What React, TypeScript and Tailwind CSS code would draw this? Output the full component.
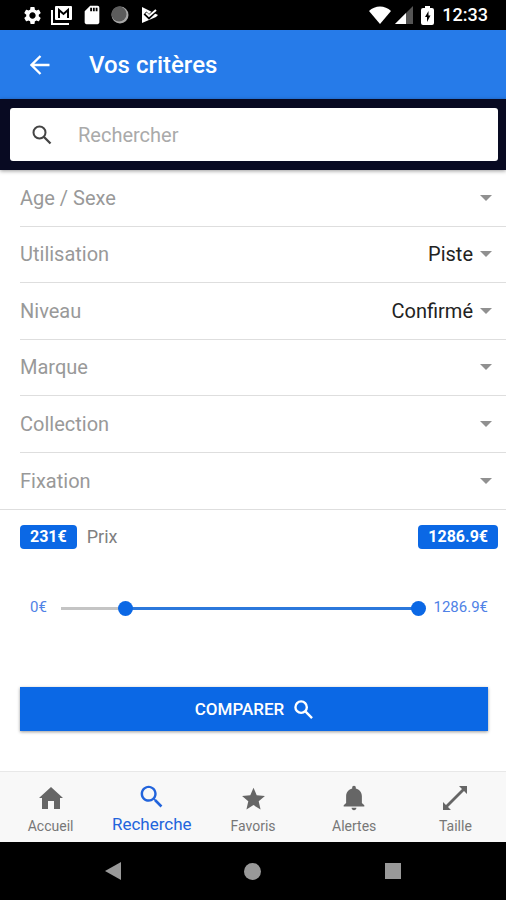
import { useState } from "react";
import type { ReactNode } from "react";
import { IoMdNotifications, IoMdSearch, IoMdStar } from "react-icons/io";
import { MdSdCard, MdSettings } from "react-icons/md";

const MAX_PRICE = 1286.9;

const criteria = [
  { id: "age", label: "Age / Sexe", value: "" },
  { id: "usage", label: "Utilisation", value: "Piste" },
  { id: "level", label: "Niveau", value: "Confirmé" },
  { id: "brand", label: "Marque", value: "" },
  { id: "collection", label: "Collection", value: "" },
  { id: "binding", label: "Fixation", value: "" },
];

function StatusBar() {
  return (
    <div className="flex h-[30px] items-center justify-between bg-black pr-[18px] pl-[22px] text-white">
      <div className="flex items-center gap-2">
        <MdSettings size={21} />
        <svg width="22" height="20" viewBox="0 0 22 20" fill="none" stroke="currentColor">
          <path d="M1 5v14h17" strokeWidth="2" />
          <rect x="4" y="1" width="17" height="14" rx="1" fill="currentColor" stroke="none" />
          <path d="M8 13V5l4.500 4L17 5v8" stroke="#000" strokeWidth="2" />
        </svg>
        <MdSdCard size={22} />
        <svg width="18" height="18" viewBox="0 0 18 18">
          <circle cx="9" cy="9" r="8.500" fill="#a8a8a8" />
          <circle cx="8" cy="8" r="7.500" fill="#5c5c5c" />
        </svg>
        <svg className="ml-1" width="18" height="18" viewBox="0 0 18 18">
          <path d="M1 1l8 4 4 2 4 2-2 2L1 17z" fill="#fff" />
          <path d="M4 7l4 4 8-8" fill="none" stroke="#000" strokeWidth="4" />
          <path d="M5 7l3 3 7-6" fill="none" stroke="#fff" strokeWidth="2" />
        </svg>
      </div>
      <div className="flex items-center">
        <svg width="22" height="18" viewBox="0 0 22 18" fill="currentColor">
          <path d="M0 5C6-1 16-1 22 5L11 18z" />
        </svg>
        <svg className="ml-1" width="18" height="18" viewBox="0 0 18 18">
          <path d="M18 0v18H0z" fill="#555" />
          <path d="M11 7v11H0z" fill="#fff" />
        </svg>
        <svg className="mr-2 ml-2" width="13" height="19" viewBox="0 0 13 19">
          <path d="M4 0h5v2h2q2 0 2 2v13q0 2-2 2H2q-2 0-2-2V4q0-2 2-2h2z" fill="#fff" />
          <path d="M7.500 5L4 11h2v5l3.500-6.500H7.500z" fill="#000" />
        </svg>
        <span className="text-lg leading-6 font-medium">12:33</span>
      </div>
    </div>
  );
}

function PriceSlider() {
  const [low, setLow] = useState(231);
  const [high, setHigh] = useState(MAX_PRICE);
  const range =
    "pointer-events-none absolute inset-0 m-0 h-4 w-full appearance-none bg-transparent [&::-webkit-slider-thumb]:pointer-events-auto [&::-webkit-slider-thumb]:size-[15px] [&::-webkit-slider-thumb]:appearance-none [&::-webkit-slider-thumb]:rounded-full [&::-webkit-slider-thumb]:bg-[#0b68e5]";
  return (
    <section>
      <div className="flex items-center pt-[15px] pr-2 pl-5">
        <span className="h-6 rounded-[4px] bg-[#0b68e5] px-[10px] text-base leading-[23px] font-bold text-white">{low}€</span>
        <span className="ml-[10px] text-lg leading-6 text-[#808080]">Prix</span>
        <span className="ml-auto h-6 rounded-[4px] bg-[#0b68e5] px-[10px] text-base leading-[23px] font-bold text-white">{high}€</span>
      </div>
      <div className="mt-12 flex items-center pr-[18px] pl-[30px] text-[15px] leading-5 text-[#4f82e6]">
        <span>0€</span>
        <div className="relative mx-[7px] h-4 flex-1">
          <div className="absolute inset-x-[7px] top-2 h-[3px] bg-[#c4c4c4]">
            <div
              className="absolute inset-y-0 bg-[#2b78dc]"
              style={{ left: `${(low / MAX_PRICE) * 100}%`, right: `${100 - (high / MAX_PRICE) * 100}%` }}
            />
          </div>
          <input className={`${range} top-px`} type="range" aria-label="Prix minimum" min={0} max={MAX_PRICE} step={0.1} value={low}
            onChange={(e) => setLow(Math.min(Number(e.target.value), high))} />
          <input className={`${range} top-px`} type="range" aria-label="Prix maximum" min={0} max={MAX_PRICE} step={0.1} value={high}
            onChange={(e) => setHigh(Math.max(Number(e.target.value), low))} />
        </div>
        <span>{MAX_PRICE}€</span>
      </div>
    </section>
  );
}

function Tab({ label, icon, active = false }: { label: string; icon: ReactNode; active?: boolean }) {
  return (
    <a
      href="#"
      aria-current={active ? "page" : undefined}
      className={
        active
          ? "flex flex-1 basis-0 flex-col items-center pt-2 text-[17px] leading-6 text-[#2264dc]"
          : "flex flex-1 basis-0 flex-col items-center pt-[10px] text-sm leading-6 text-[#777]"
      }
    >
      <span className="flex h-8 items-center text-[#666] in-aria-[current=page]:text-[#2264dc]">{icon}</span>
      <span>{label}</span>
    </a>
  );
}

export default function App() {
  return (
    <div className="flex min-h-screen flex-col bg-white font-[Roboto,sans-serif]">
      <StatusBar />
      <header className="flex h-[69px] items-center bg-[#267be9] pl-[30px] text-white">
        <button type="button" aria-label="Retour" className="mr-[39px]">
          <svg width="20" height="20" viewBox="0 0 20 20" fill="none" stroke="currentColor" strokeWidth="2.300">
            <path d="M19.500 10H2M10.500 1L1.500 10l9 9" />
          </svg>
        </button>
        <h1 className="text-2xl leading-8 font-medium">Vos critères</h1>
      </header>
      <div className="z-10 bg-[#080a22] py-[9px] pr-2 pl-[10px] shadow-[0_1px_4px_rgba(0,0,0,0.4)]">
        <label className="flex h-[53px] items-center rounded-[3px] bg-white pl-[22px]">
          <svg width="20" height="20" viewBox="0 0 20 20" fill="none" stroke="#444" strokeWidth="2">
            <circle cx="7.500" cy="7.500" r="6" />
            <path d="M12 12l6.500 6.500" strokeWidth="2.300" />
          </svg>
          <input
            type="search"
            aria-label="Rechercher"
            placeholder="Rechercher"
            className="ml-[26px] min-w-0 flex-1 text-xl leading-7 outline-none placeholder:text-[#aaa]"
          />
        </label>
      </div>
      <main className="flex-1">
        <div className="grid h-[340px] grid-rows-6 border-b border-[#dedede]">
          {criteria.map((c) => (
            <div key={c.id} className="ml-5 flex items-center border-b border-[#dedede] pr-[14px] text-xl leading-7 last:border-b-0">
              <label htmlFor={c.id} className="text-[#999]">{c.label}</label>
              <select id={c.id} defaultValue={c.value} className="min-w-0 flex-1 appearance-none bg-transparent text-right text-[#222] outline-none [text-align-last:right]">
                <option value={c.value}>{c.value}</option>
              </select>
              <svg className="ml-[7px]" width="12" height="6" viewBox="0 0 12 6" fill="#909090">
                <path d="M0 0h12L6 6z" />
              </svg>
            </div>
          ))}
        </div>
        <PriceSlider />
        <div className="pt-[70px] pr-[18px] pl-5">
          <button type="button" className="flex h-11 w-full items-center justify-center gap-[10px] bg-[#0b68e5] text-[17px] leading-6 font-medium text-white shadow-[0_1px_3px_rgba(0,0,0,0.4)]">
            COMPARER
            <svg width="19" height="19" viewBox="0 0 20 20" fill="none" stroke="currentColor" strokeWidth="2.500">
              <circle cx="7.500" cy="7.500" r="6" />
              <path d="M12 12l7 7" />
            </svg>
          </button>
        </div>
      </main>
      <nav className="flex h-[71px] border-t border-[#e8e8e8] bg-[#f8f8f8]">
        <Tab
          label="Accueil"
          icon={
            <svg width="24" height="22" viewBox="0 0 24 22" fill="currentColor">
              <path d="M12 0l12 11h-3v11h-6v-8H9v8H3V11H0z" />
            </svg>
          }
        />
        <Tab label="Recherche" active icon={<IoMdSearch size={29} />} />
        <Tab label="Favoris" icon={<IoMdStar size={29} />} />
        <Tab label="Alertes" icon={<IoMdNotifications size={30} />} />
        <Tab
          label="Taille"
          icon={
            <svg width="26" height="26" viewBox="0 0 26 26" fill="currentColor">
              <path d="M17 1h8v8l-3-3L6 22l3 3H1v-8l3 3L20 4z" />
            </svg>
          }
        />
      </nav>
      <div className="flex h-[58px] items-center justify-around bg-black px-[43px]">
        <button type="button" aria-label="Précédent">
          <svg width="16" height="18" viewBox="0 0 16 18" fill="#999"><path d="M16 0v18L0 9z" /></svg>
        </button>
        <button type="button" aria-label="Accueil système" className="size-[17px] rounded-full bg-[#999]" />
        <button type="button" aria-label="Applications récentes" className="size-4 bg-[#999]" />
      </div>
    </div>
  );
}
